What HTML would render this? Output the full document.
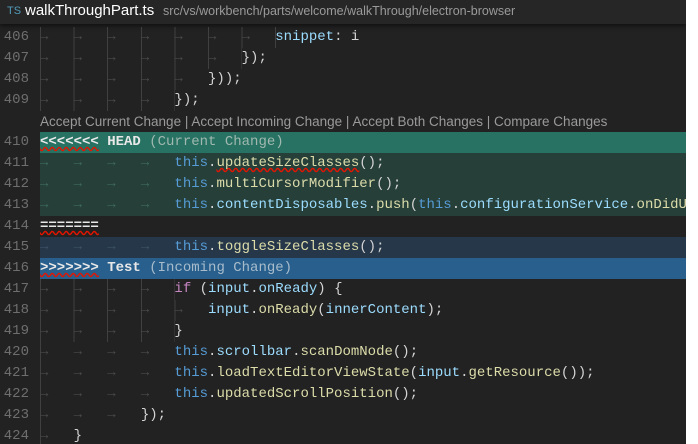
<!DOCTYPE html><html><head><style>
body{margin:0;width:698px;height:444px;background:#fff;overflow:hidden;font-family:"Liberation Mono",monospace}
#ed{position:absolute;left:0;top:0;width:686px;height:444px;background:#222;overflow:hidden}
#hd{position:absolute;left:0;top:0;width:686px;height:24px;background:#262626;box-shadow:0 2px 4px #111;font-family:"Liberation Sans",sans-serif;white-space:nowrap}
.r{position:absolute;left:0;width:686px;height:21px;line-height:21px;font-size:14px;white-space:pre;color:#d4d4d4}
.n{position:absolute;left:0;width:29px;text-align:right;color:#6e6e6e}
.c{position:absolute;left:40px}
.t{color:#569cd6}.f{color:#dcdcaa}.p{color:#9cdcfe}.k{color:#c586c0}.w{color:#e8e8e8;font-weight:bold}
.a{color:#4a4a4a}
.sq{text-decoration:underline wavy #e51400;text-decoration-skip-ink:none}
.gd{position:absolute;left:40px;top:0;height:21px;background:repeating-linear-gradient(90deg,#404040 0 1px,transparent 1px 33.6px)}
</style></head><body><div id="ed">
<div id="hd"><span style="position:absolute;left:7px;top:5px;font-size:11px;color:#519aba">TS</span><span style="position:absolute;left:25px;top:2px;font-size:15px;color:#fff">walkThroughPart.ts</span><span style="position:absolute;left:163px;top:4px;font-size:12.5px;color:#9a9a9a">src/vs/workbench/parts/welcome/walkThrough/electron-browser</span></div>

<div class="r" style="top:27px"><span class="n">406</span><span class="gd" style="width:236px"></span><span class="c"><span class="a">→   →   →   →   →   →   →   </span><span class="p">snippet</span>: i</span></div>
<div class="r" style="top:48px"><span class="n">407</span><span class="gd" style="width:202px"></span><span class="c"><span class="a">→   →   →   →   →   →   </span>});</span></div>
<div class="r" style="top:69px"><span class="n">408</span><span class="gd" style="width:168px"></span><span class="c"><span class="a">→   →   →   →   →   </span>}));</span></div>
<div class="r" style="top:90px"><span class="n">409</span><span class="gd" style="width:135px"></span><span class="c"><span class="a">→   →   →   →   </span>});</span></div>
<div class="r" style="top:111px;font-family:'Liberation Sans',sans-serif;font-size:13.5px;color:#9a9a9a"><span style="position:absolute;left:40px">Accept Current Change | Accept Incoming Change | Accept Both Changes | Compare Changes</span></div>
<div class="r" style="top:132px"><span class="n">410</span><span class="c" style="right:0;background:#277262"><span class="sq w">&lt;&lt;&lt;&lt;&lt;&lt;&lt;</span> <span class="w">HEAD</span> <span style="color:#a0b8b0">(Current Change)</span></span></div>
<div class="r" style="top:153px"><span class="n">411</span><span class="c" style="right:0;background:#263f39"><span class="a" style="color:#3e6a5e">→   →   →   →   </span><span class="t">this</span>.<span class="f sq">updateSizeClasses</span>();</span></div>
<div class="r" style="top:174px"><span class="n">412</span><span class="c" style="right:0;background:#263f39"><span class="a" style="color:#3e6a5e">→   →   →   →   </span><span class="t">this</span>.<span class="f">multiCursorModifier</span>();</span></div>
<div class="r" style="top:195px"><span class="n">413</span><span class="c" style="right:0;background:#263f39"><span class="a" style="color:#3e6a5e">→   →   →   →   </span><span class="t">this</span>.<span class="p">contentDisposables</span>.<span class="f">push</span>(<span class="t">this</span>.<span class="p">configurationService</span>.<span class="f">onDidU</span></span></div>
<div class="r" style="top:216px"><span class="n">414</span><span class="c"><span class="sq w">=======</span></span></div>
<div class="r" style="top:237px"><span class="n">415</span><span class="c" style="right:0;background:#263749"><span class="a" style="color:#3d5366">→   →   →   →   </span><span class="t">this</span>.<span class="f">toggleSizeClasses</span>();</span></div>
<div class="r" style="top:258px"><span class="n">416</span><span class="c" style="right:0;background:#285f8c"><span class="sq w">&gt;&gt;&gt;&gt;&gt;&gt;&gt;</span> <span class="w">Test</span> <span style="color:#a8bccc">(Incoming Change)</span></span></div>
<div class="r" style="top:279px"><span class="n">417</span><span class="gd" style="width:135px"></span><span class="c"><span class="a">→   →   →   →   </span><span class="k">if</span> (<span class="p">input</span>.<span class="p">onReady</span>) {</span></div>
<div class="r" style="top:300px"><span class="n">418</span><span class="gd" style="width:168px"></span><span class="c"><span class="a">→   →   →   →   →   </span><span class="p">input</span>.<span class="f">onReady</span>(<span class="p">innerContent</span>);</span></div>
<div class="r" style="top:321px"><span class="n">419</span><span class="gd" style="width:135px"></span><span class="c"><span class="a">→   →   →   →   </span>}</span></div>
<div class="r" style="top:342px"><span class="n">420</span><span class="gd" style="width:2px"></span><span class="c"><span class="a">→   →   →   →   </span><span class="t">this</span>.<span class="p">scrollbar</span>.<span class="f">scanDomNode</span>();</span></div>
<div class="r" style="top:363px"><span class="n">421</span><span class="gd" style="width:2px"></span><span class="c"><span class="a">→   →   →   →   </span><span class="t">this</span>.<span class="f">loadTextEditorViewState</span>(<span class="p">input</span>.<span class="f">getResource</span>());</span></div>
<div class="r" style="top:384px"><span class="n">422</span><span class="gd" style="width:2px"></span><span class="c"><span class="a">→   →   →   →   </span><span class="t">this</span>.<span class="f">updatedScrollPosition</span>();</span></div>
<div class="r" style="top:405px"><span class="n">423</span><span class="gd" style="width:2px"></span><span class="c"><span class="a">→   →   →   </span>});</span></div>
<div class="r" style="top:426px"><span class="n">424</span><span class="gd" style="width:2px"></span><span class="c"><span class="a">→   </span>}</span></div>
</div></body></html>
